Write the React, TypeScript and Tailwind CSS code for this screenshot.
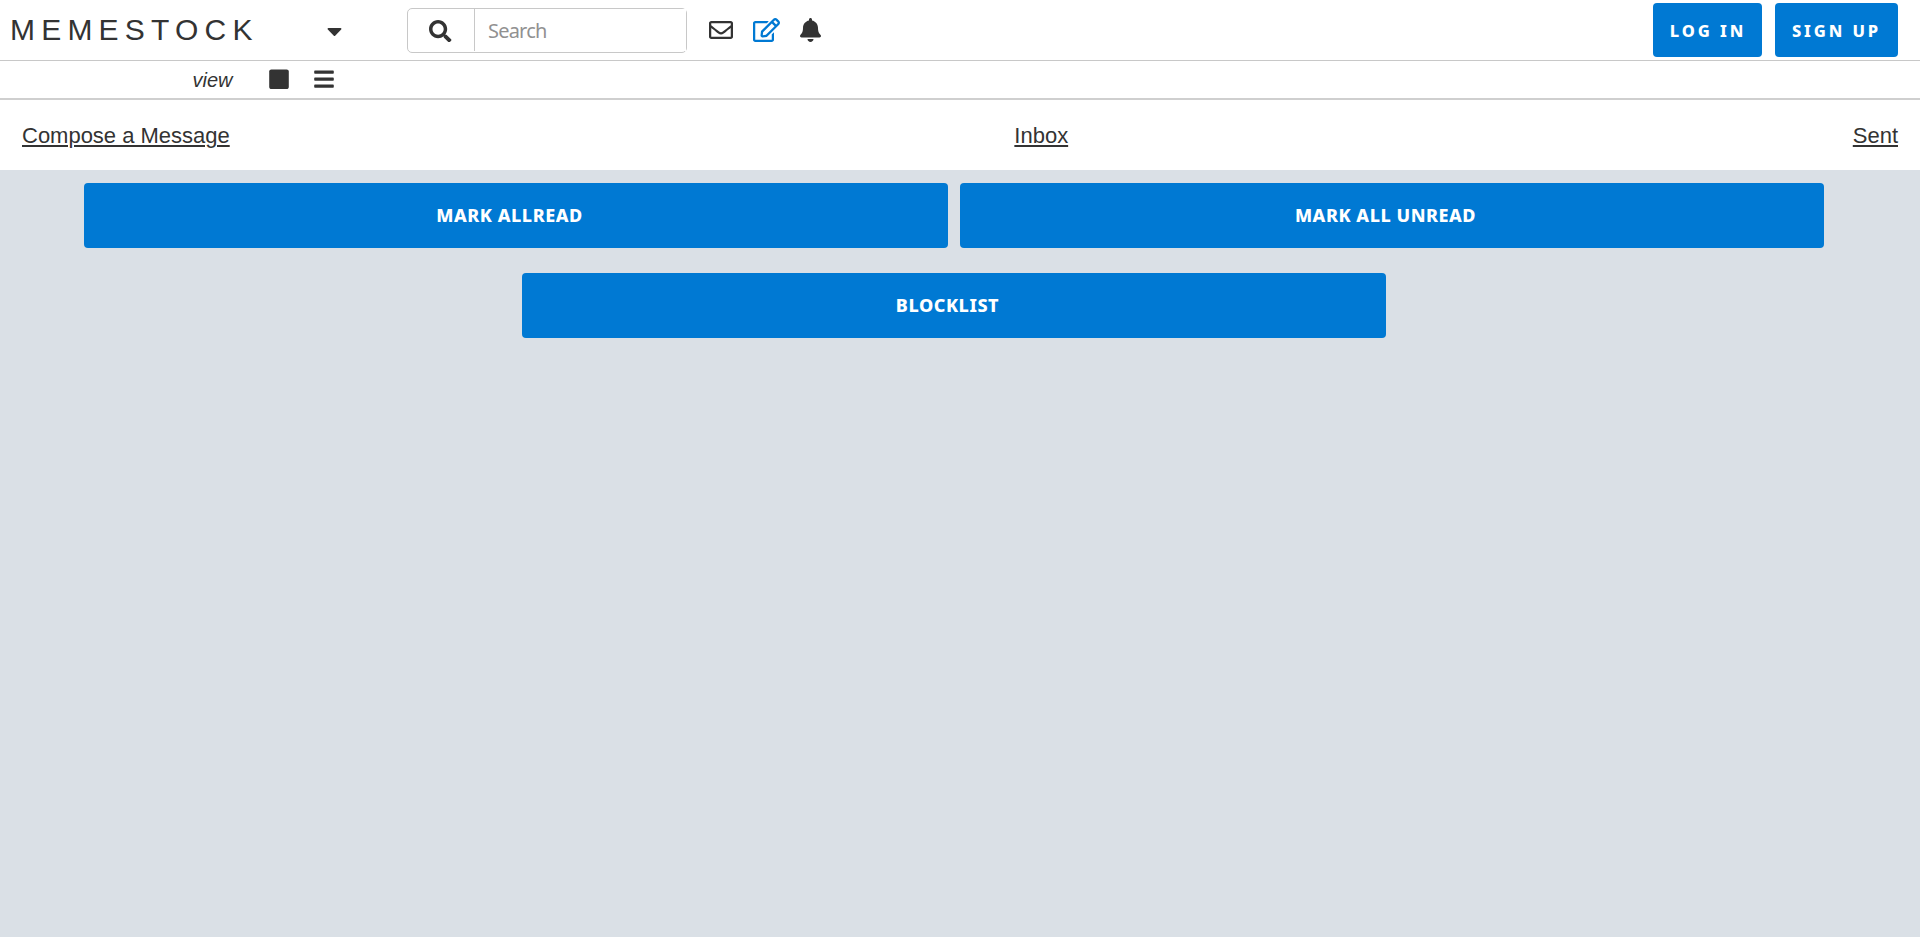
import type { ReactNode } from "react";
import { FaBars, FaBell, FaCaretDown, FaRegEdit, FaRegEnvelope, FaSearch, FaSquare } from "react-icons/fa";

function AuthButton({ className, children }: { className: string; children: ReactNode }) {
  return (
    <button
      className={`h-[54px] rounded-[4px] bg-[#0079d3] pt-[2.6px] font-['Noto_Sans',sans-serif] text-[16.5px] leading-none font-extrabold text-white whitespace-nowrap ${className}`}
    >
      {children}
    </button>
  );
}

function ActionButton({ children }: { children: ReactNode }) {
  return (
    <button className="h-[65px] w-[864px] rounded-[4px] bg-[#0079d3] pr-[13px] pb-[2px] font-['Noto_Sans',sans-serif] text-[18px] leading-none font-extrabold tracking-[0.55px] text-white">
      {children}
    </button>
  );
}

function Header() {
  return (
    <header className="flex h-[61px] items-start border-b border-[#c8c8c8] bg-white">
      <h1 className="w-[327px] pt-[13px] pl-[10px] text-[30px] leading-[34px] tracking-[6.2px]">MEMESTOCK</h1>
      <FaCaretDown className="mt-[19px] h-6 w-[15px]" />
      <form className="mt-2 ml-[65px] flex h-[45px] w-[280px] rounded-[5px] border border-[#c8c8c8]">
        <span className="flex w-[66px] justify-center pt-[11px] pr-px">
          <FaSearch className="size-[22.4px]" />
        </span>
        <input
          className="h-[42px] w-[212px] border-l border-[#c8c8c8] bg-white pl-[13px] font-['Noto_Sans',sans-serif] text-[20px] tracking-[-0.8px] outline-none placeholder:text-[#919191]"
          placeholder="Search"
        />
      </form>
      <nav className="mt-[18px] ml-[22.4px] flex">
        <FaRegEnvelope className="size-6" />
        <FaRegEdit className="ml-5 h-6 w-[27px] text-[#0079d3]" />
        <FaBell className="ml-[19.6px] h-6 w-[21px]" />
      </nav>
      <div className="mt-[3px] mr-[22px] ml-auto flex gap-[13px]">
        <AuthButton className="w-[109px] pl-px tracking-[2.9px]">LOG IN</AuthButton>
        <AuthButton className="w-[123px] tracking-[2.9px]">SIGN UP</AuthButton>
      </div>
    </header>
  );
}

function ViewBar() {
  return (
    <div className="flex h-[39px] items-start border-b-2 border-[#cfcfcf] bg-white">
      <span className="w-[269.3px] pt-[7px] pl-[192.5px] text-[20px] leading-6 italic">view</span>
      <FaSquare className="mt-[7px] h-[22.4px] w-[20px]" />
      <FaBars className="mt-[7px] ml-[24.7px] h-[22.4px] w-[20px]" />
    </div>
  );
}

function MessageLinks() {
  const link = "underline decoration-2 underline-offset-2";
  return (
    <nav className="flex h-[70px] items-center justify-between bg-white px-[22px] pt-px text-[22px] tracking-[-0.01px]">
      <a className={link} href="#compose">Compose a Message</a>
      <a className={link} href="#inbox">Inbox</a>
      <a className={link} href="#sent">Sent</a>
    </nav>
  );
}

export default function App() {
  return (
    <div className="min-h-screen bg-[#dae0e6] font-['Liberation_Sans',Arial,sans-serif] text-[#333333]">
      <Header />
      <ViewBar />
      <MessageLinks />
      <main className="flex flex-wrap justify-center gap-x-3 gap-y-[25px] pt-[13px] pr-3">
        <ActionButton>MARK ALLREAD</ActionButton>
        <ActionButton>MARK ALL UNREAD</ActionButton>
        <ActionButton>BLOCKLIST</ActionButton>
      </main>
    </div>
  );
}
